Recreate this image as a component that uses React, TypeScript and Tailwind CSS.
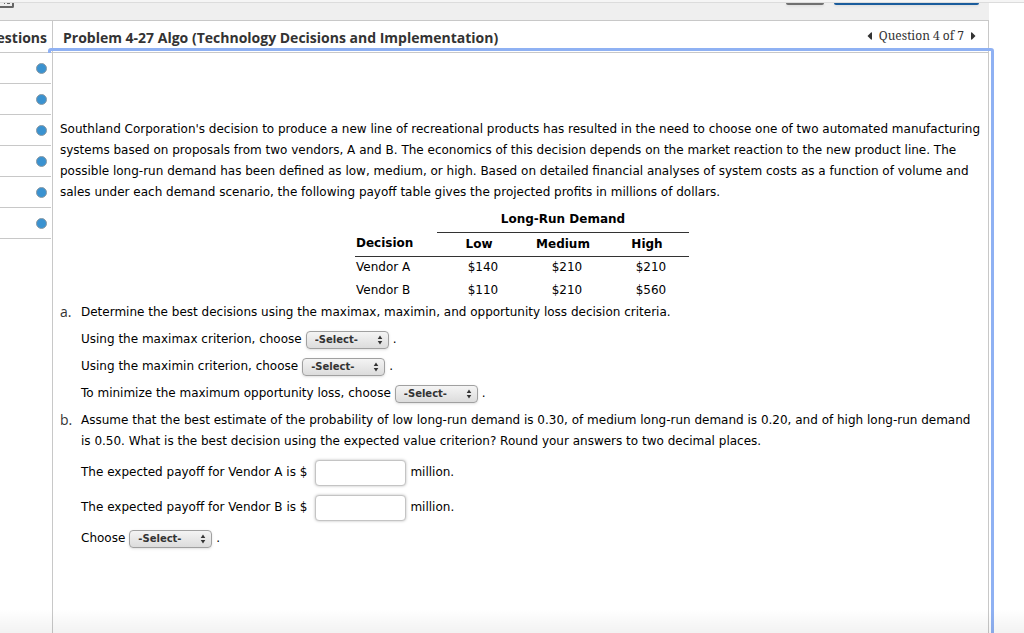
import { useId } from "react";

const questions = [1, 2, 3, 4, 5, 6];

const payoffs = [
  { vendor: "Vendor A", values: ["$140", "$210", "$210"] },
  { vendor: "Vendor B", values: ["$110", "$210", "$560"] },
];

function ChoiceRow({ label, choices }: { label: string; choices: string[] }) {
  const id = useId();
  return (
    <div className="flex h-[27px] items-center">
      <label htmlFor={id}>{label}</label>
      <span className="relative mr-1 ml-1 inline-flex">
        <select
          id={id}
          className="h-[18px] w-[83px] appearance-none rounded border border-[#a0a0a0] bg-linear-to-b from-[#f4f4f4] to-[#dcdcdc] pl-2 text-[10px] leading-4 font-bold text-[#333] shadow-sm"
        >
          <option>-Select-</option>
          {choices.map((choice) => (
            <option key={choice}>{choice}</option>
          ))}
        </select>
        <svg
          viewBox="0 0 6 10"
          className="pointer-events-none absolute top-1 right-1.5 h-[10px] w-[6px] fill-[#333]"
          aria-hidden="true"
        >
          <path d="M3 0.500 5.300 4H.7zM3 9.500.7 6h4.600z" />
        </svg>
      </span>
      <span>.</span>
    </div>
  );
}

function PayoffRow({ vendor }: { vendor: string }) {
  const id = useId();
  return (
    <div className="flex h-[35px] items-center">
      <label htmlFor={id}>The expected payoff for {vendor} is $</label>
      <input
        id={id}
        type="text"
        className="mr-1 ml-2 h-[26px] w-[91px] rounded border border-[#c4c4c4] bg-white px-2 shadow-[0_0_3px_#bbb]"
      />
      <span>million.</span>
    </div>
  );
}

function PayoffTable() {
  return (
    <div className="pt-1 pl-0.5">
      <table className="mx-auto border-collapse">
        <thead>
          <tr className="h-[25px]">
            <td className="w-[82px] p-0" />
            <th colSpan={3} scope="colgroup" className="border-b border-[#333] p-0">
              Long-Run Demand
            </th>
          </tr>
          <tr className="h-6 border-b border-[#333]">
            <th scope="col" className="p-0 pl-px text-left">Decision</th>
            <th scope="col" className="w-[84px] p-0">Low</th>
            <th scope="col" className="w-[84px] p-0">Medium</th>
            <th scope="col" className="w-[84px] p-0">High</th>
          </tr>
        </thead>
        <tbody>
          {payoffs.map((row) => (
            <tr key={row.vendor} className="h-[23px]">
              <td className="p-0 pl-px">{row.vendor}</td>
              {row.values.map((value, i) => (
                <td key={i} className="p-0 pl-2 text-center">{value}</td>
              ))}
            </tr>
          ))}
        </tbody>
      </table>
    </div>
  );
}

export default function App() {
  return (
    <div className="relative flex min-h-screen flex-col overflow-hidden bg-white font-['Open_Sans',sans-serif] text-[#333]">
      <div className="h-[3px] border-b border-[#dcdcdc] bg-[#f5f5f5]" />
      <div className="mr-[35px] flex h-[18px] items-start overflow-hidden border-b border-[#c8c8c8] bg-[#efefef] pr-2.5">
        <svg viewBox="0 0 14 5" className="h-[5px] w-[14px] fill-none stroke-[#666]" aria-hidden="true">
          <path d="M0 4h12.500q.5 0 .5-.5V0" strokeWidth="2" />
          <path d="M4 .5h1M7 .5h3" strokeWidth="1" />
        </svg>
        <button aria-label="Back" className="ml-auto h-0.5 w-[38px] rounded-b bg-[#707070] shadow" />
        <button aria-label="Submit" className="ml-2.5 h-0.5 w-[145px] rounded-b bg-[#1a5c9c] shadow" />
      </div>

      <div className="mr-[35px] flex grow">
        <aside className="flex w-[53px] shrink-0 flex-col">
          <h2 className="flex h-8 justify-end border-r border-b border-[#c8c8c8] pt-[7px] pr-[5px] text-sm leading-5 font-bold">
            Questions
          </h2>
          <ul className="relative z-10 grow border-r border-[#c8c8c8] bg-white pr-px">
            {questions.map((n) => (
              <li key={n} className="flex h-[31px] items-center justify-end border-b border-[#c8c8c8] pr-1">
                <a
                  href={`#question-${n}`}
                  aria-label={`Question ${n}`}
                  className="size-[11px] rounded-full border border-[#8a9aa5] bg-[#3a92d0]"
                />
              </li>
            ))}
          </ul>
        </aside>

        <div className="flex min-w-0 grow flex-col">
          <header className="flex h-8 items-start justify-between border-r border-b border-[#c8c8c8] pt-[7px] pr-3 pl-2.5">
            <h1 className="text-sm leading-5 font-bold">
              Problem 4-27 Algo (Technology Decisions and Implementation)
            </h1>
            <nav className="flex items-center gap-1.5 font-['Noto_Serif','Liberation_Serif',serif] text-xs leading-4">
              <button aria-label="Previous question">
                <svg viewBox="0 0 6 8" className="h-2 w-1.5 fill-[#333]"><path d="M.5 4 4 .5Q5 0 5 1v6q0 1-1 .5z" /></svg>
              </button>
              Question 4 of 7
              <button aria-label="Next question">
                <svg viewBox="0 0 6 8" className="h-2 w-1.5 fill-[#333]"><path d="M5.500 4 2 .5Q1 0 1 1v6q0 1 1 .5z" /></svg>
              </button>
            </nav>
          </header>

          <main className="relative grow border-r border-[#c8c8c8] pt-[66px] pr-1.5 pb-10 pl-[7px] font-['DejaVu_Sans',sans-serif] text-xs leading-[21px] text-black">
            <div className="pointer-events-none absolute -top-[5px] -right-1.5 -bottom-[5px] -left-[5px] rounded-[3px] border-3 border-[#8fb1f3]" />
            <p>
              Southland Corporation's decision to produce a new line of recreational products has resulted in the need to choose one of two automated manufacturing systems based on proposals from two vendors, A and B. The economics of this decision depends on the market reaction to the new product line. The possible long-run demand has been defined as low, medium, or high. Based on detailed financial analyses of system costs as a function of volume and sales under each demand scenario, the following payoff table gives the projected profits in millions of dollars.
            </p>
            <PayoffTable />
            <ol>
              <li className="flex">
                <span className="w-[21px] shrink-0 font-['Open_Sans',sans-serif] text-sm leading-[19px] text-[#333]">a.</span>
                <div>
                  <p className="mb-[3px]">
                    Determine the best decisions using the maximax, maximin, and opportunity loss decision criteria.
                  </p>
                  <ChoiceRow label="Using the maximax criterion, choose" choices={["Vendor A", "Vendor B"]} />
                  <ChoiceRow label="Using the maximin criterion, choose" choices={["Vendor A", "Vendor B"]} />
                  <ChoiceRow label="To minimize the maximum opportunity loss, choose" choices={["Vendor A", "Vendor B"]} />
                </div>
              </li>
              <li className="mt-[3px] flex">
                <span className="w-[21px] shrink-0 font-['Open_Sans',sans-serif] text-sm leading-[19px] text-[#333]">b.</span>
                <div>
                  <p className="mb-[3px]">
                    Assume that the best estimate of the probability of low long-run demand is 0.30, of medium long-run demand is 0.20, and of high long-run demand is 0.50. What is the best decision using the expected value criterion? Round your answers to two decimal places.
                  </p>
                  <PayoffRow vendor="Vendor A" />
                  <PayoffRow vendor="Vendor B" />
                  <ChoiceRow label="Choose" choices={["Vendor A", "Vendor B"]} />
                </div>
              </li>
            </ol>
          </main>
        </div>
      </div>
      <div className="pointer-events-none absolute inset-x-0 bottom-0 z-20 h-6 bg-linear-to-b from-transparent to-black/5" />
    </div>
  );
}
